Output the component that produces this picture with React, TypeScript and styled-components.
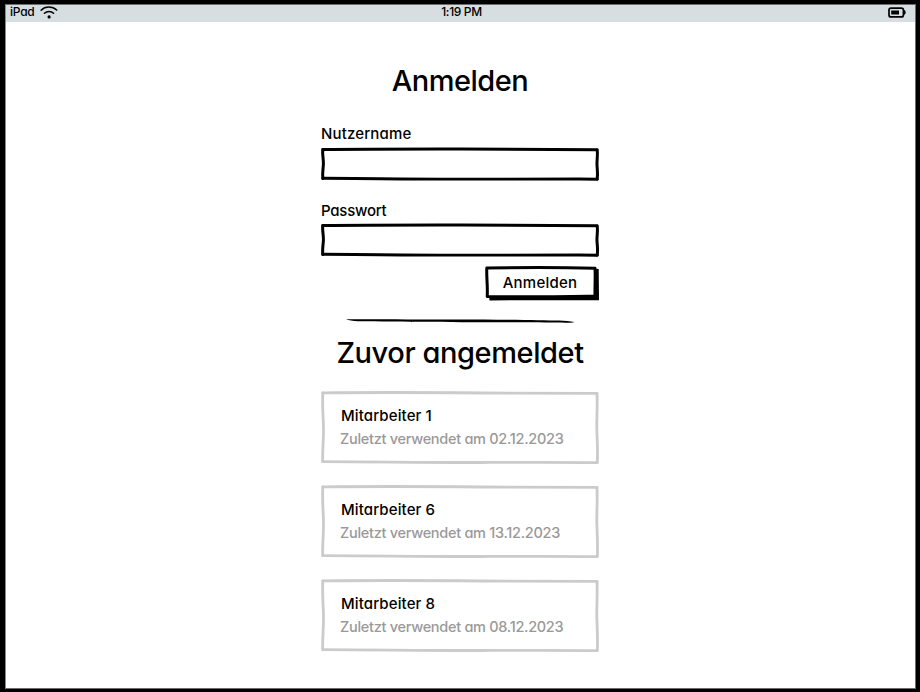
import React from "react";
import styled, { createGlobalStyle } from "styled-components";

const GlobalStyle = createGlobalStyle`
  * { box-sizing: border-box; }
  body {
    margin: 0;
    background: #000;
    color: #000;
    font-family: Inter, "Open Sans", sans-serif;
    font-feature-settings: "cv11";
    font-weight: 500;
  }
`;

const Tablet = styled.div`
  width: 920px;
  height: 692px;
  padding: 4px 4px 3px 5px;
  background: #000;
  overflow: hidden;
`;

const Screen = styled.div`
  height: 100%;
  display: flex;
  flex-direction: column;
  background: #fff;
  border: 1px solid #6b6e70;
  border-left-color: #8a8a8a;
`;

const StatusBar = styled.header`
  flex: none;
  height: 17px;
  display: grid;
  grid-template-columns: 1fr auto 1fr;
  align-items: center;
  padding: 0 9px 3px 4px;
  background: #d6dee1;
  font-size: 12px;
  line-height: 14px;
`;

const Device = styled.div`
  display: flex;
  align-items: center;
  gap: 6px;
  letter-spacing: -0.25px;
`;

const Clock = styled.time`
  letter-spacing: -0.35px;
  margin-left: 7px;
`;

const BatterySlot = styled.div`
  display: flex;
  justify-content: flex-end;
`;

const Icon = styled.svg`
  display: block;
  overflow: visible;
`;

const Content = styled.main`
  width: 278px;
  margin-left: 315px;
  display: flex;
  flex-direction: column;
`;

const Title = styled.h1<{ $top: number; $spacing: number }>`
  margin: ${(p) => p.$top}px -10px 0;
  text-align: center;
  font-size: 29px;
  line-height: 36px;
  font-weight: 500;
  white-space: nowrap;
  letter-spacing: ${(p) => p.$spacing}px;
`;

const Form = styled.form`
  display: flex;
  flex-direction: column;
  margin-top: 25px;
`;

const Field = styled.label<{ $spacing: number }>`
  display: block;
  height: 77px;
  font-size: 15px;
  line-height: 20px;
  letter-spacing: ${(p) => p.$spacing}px;

  & + & {
    height: 76px;
  }
`;

const InputBox = styled.div<{ $gap: number }>`
  position: relative;
  height: 33px;
  margin-top: ${(p) => p.$gap}px;
`;

const Input = styled.input`
  display: block;
  width: 100%;
  height: 100%;
  padding: 4px 10px;
  border: 0;
  outline: 0;
  background: transparent;
  font: inherit;
`;

const Outline = styled.svg`
  position: absolute;
  inset: 0;
  overflow: visible;
  pointer-events: none;
  fill: none;
  stroke-linecap: round;
  stroke-linejoin: round;
`;

const Submit = styled.button`
  position: relative;
  align-self: flex-end;
  width: 114px;
  height: 34px;
  margin-top: -11px;
  padding: 0 4px 2px 0;
  border: 0;
  background: transparent;
  color: inherit;
  font: inherit;
  font-size: 15px;
  letter-spacing: 0.25px;
`;

const ButtonText = styled.span`
  position: relative;
`;

const Divider = styled.div`
  display: flex;
  justify-content: center;
  height: 5px;
  margin-top: 19px;
`;

const CardList = styled.ul`
  list-style: none;
  margin: 21px 0 0;
  padding: 0;
  display: flex;
  flex-direction: column;
  gap: 21px;
`;

const Card = styled.li`
  position: relative;
  height: 73px;
  padding: 14px 19px 0 20px;
`;

const UserName = styled.div`
  font-size: 15px;
  line-height: 20px;
  letter-spacing: 0.12px;
`;

const LastUsed = styled.div`
  margin: 3px 0 0 -1px;
  color: #999;
  font-size: 14.5px;
  line-height: 20px;
  letter-spacing: -0.29px;
  white-space: nowrap;
`;

const InputOutline = () => (
  <Outline width="278" height="33" viewBox="0 0 278 33" stroke="#000">
    <path d="M1.8 1.5 C40 .8 90 .9 140 .9 S240 1.7 276 1.8" strokeWidth="3" />
    <path d="M1.8 1.5 C1.1 6 2.6 11 2.4 16 S1.2 25 1.8 30.5" strokeWidth="3" />
    <path d="M276.2 2 C277 7 275.7 12 276 17 S277 26 276.2 31.1" strokeWidth="3" />
    <path d="M1.8 30.3 C50 30.4 90 31.3 150 31.1 S240 30.8 276.2 31.2" strokeWidth="2.9" />
  </Outline>
);

const CardOutline = () => (
  <Outline width="278" height="73" viewBox="0 0 278 73" stroke="#cbcbcb">
    <path d="M1.8 .9 C60 .2 120 .6 160 1 S240 1.5 276 1.4" strokeWidth="2.8" />
    <path d="M1.8 .9 C1.1 18 2.5 26 2.5 38 S1.4 58 1.7 69.8" strokeWidth="2.8" />
    <path d="M276 1.6 C276.6 18 275.4 28 275.9 40 S276.8 60 276.3 70.6" strokeWidth="2.8" />
    <path d="M1.8 69.6 C60 69.7 100 70.7 160 70.5 S240 70.2 276 70.6" strokeWidth="2.8" />
  </Outline>
);

const users = [
  { name: "Mitarbeiter 1", date: "02.12.2023" },
  { name: "Mitarbeiter 6", date: "13.12.2023" },
  { name: "Mitarbeiter 8", date: "08.12.2023" },
];

export default function App() {
  return (
    <>
      <GlobalStyle />
      <Tablet>
        <Screen>
          <StatusBar>
            <Device>
              iPad
              <Icon width="18" height="14" viewBox="0 0 18 14" fill="none" stroke="#000" strokeLinecap="round">
                <path d="M1.1 5.2 C5.2 1 12.2 1 16.7 5" strokeWidth="1.5" />
                <path d="M4.4 8.2 C7 5.8 11.2 5.8 13.6 8.2" strokeWidth="1.5" />
                <circle cx="9.1" cy="11.9" r="1.6" fill="#000" stroke="none" />
              </Icon>
            </Device>
            <Clock>1:19 PM</Clock>
            <BatterySlot>
              <Icon width="18" height="11" viewBox="0 0 18 11">
                <rect x="1" y="1.1" width="14.4" height="8.8" rx="2" fill="none" stroke="#000" strokeWidth="1.7" />
                <path d="M3.2 3.5h7.8v4H3.2z" />
                <path d="M16 3.1c2.2.2 2.2 4.5 0 4.7z" />
              </Icon>
            </BatterySlot>
          </StatusBar>
          <Content>
            <Title $top={41} $spacing={-0.5}>
              Anmelden
            </Title>
            <Form onSubmit={(e) => e.preventDefault()}>
              <Field $spacing={0.15}>
                Nutzername
                <InputBox $gap={4}>
                  <Input type="text" />
                  <InputOutline />
                </InputBox>
              </Field>
              <Field $spacing={-0.25}>
                Passwort
                <InputBox $gap={3}>
                  <Input type="password" />
                  <InputOutline />
                </InputBox>
              </Field>
              <Submit type="submit">
                <Outline width="114" height="34" viewBox="0 0 114 34">
                  <path d="M4 31 L108 30 L109.5 2.8 L113.7 3 L114 34.2 L4.6 34.4 Z" fill="#000" />
                  <path
                    d="M1.8 2 C40 1.4 75 1.4 110 2.2 C110.5 11 109.8 20 110 29.9 C75 30.9 40 30.8 2.2 30.6 C2.9 20 1.3 11 1.8 2 Z"
                    fill="#fff"
                    stroke="#000"
                    strokeWidth="3"
                  />
                </Outline>
                <ButtonText>Anmelden</ButtonText>
              </Submit>
            </Form>
            <Divider>
              <Icon width="228" height="5" viewBox="0 0 228 5">
                <path d="M0 0.2 C25 0 70 .4 110 .4 C155 .4 195 1 213 1.6 Q222 2 228.5 3 Q227 4.1 215 3.5 C180 3.2 70 3.2 12 2.2 Q4 1.6 0 .2Z" />
              </Icon>
            </Divider>
            <Title as="h2" $top={11} $spacing={-0.42}>
              Zuvor angemeldet
            </Title>
            <CardList>
              {users.map((user) => (
                <Card key={user.name}>
                  <CardOutline />
                  <UserName>{user.name}</UserName>
                  <LastUsed>Zuletzt verwendet am {user.date}</LastUsed>
                </Card>
              ))}
            </CardList>
          </Content>
        </Screen>
      </Tablet>
    </>
  );
}
